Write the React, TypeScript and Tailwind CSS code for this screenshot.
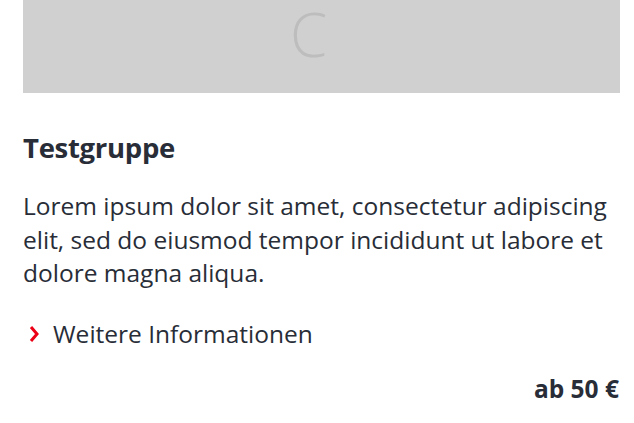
const font = { fontFamily: '"Open Sans", "Noto Sans", sans-serif' };

const Chevron = () => (
  <svg width="12" height="18" viewBox="0 0 12 18" className="text-[#ec0016]">
    <polyline points="3,2 9,9 3,16" fill="none" stroke="currentColor" strokeWidth="3" strokeLinejoin="miter" />
  </svg>
);

export default function App() {
  return (
    <div className="min-h-[423px] w-full bg-white pl-[23px] pr-[14px] text-[#282d37]" style={font}>
      {/* image placeholder */}
      <div className="flex h-[93px] items-start justify-center overflow-hidden bg-[#d0d0d0]">
        <span className="mr-[26px] text-[60px] font-light leading-[68px] text-[#bdbdbd]">C</span>
      </div>

      <div className="flex flex-col pt-[36px]">
        <h2 className="text-[27.5px] font-bold leading-[38px] tracking-[-0.3px]">Testgruppe</h2>

        <p className="mt-[22px] text-[24.5px] leading-[33.5px]">
          Lorem ipsum dolor sit amet, consectetur adipiscing elit, sed do eiusmod tempor
          incididunt ut labore et dolore magna aliqua.
        </p>

        <a className="mt-[27px] flex items-center gap-[13px] text-[24.5px] leading-[34px]">
          <span className="ml-[5px] flex">
            <Chevron />
          </span>
          Weitere Informationen
        </a>

        <div className="mt-[21px] pr-[1px] text-right text-[24.5px] font-bold leading-[34px]">ab 50 €</div>
      </div>
    </div>
  );
}
